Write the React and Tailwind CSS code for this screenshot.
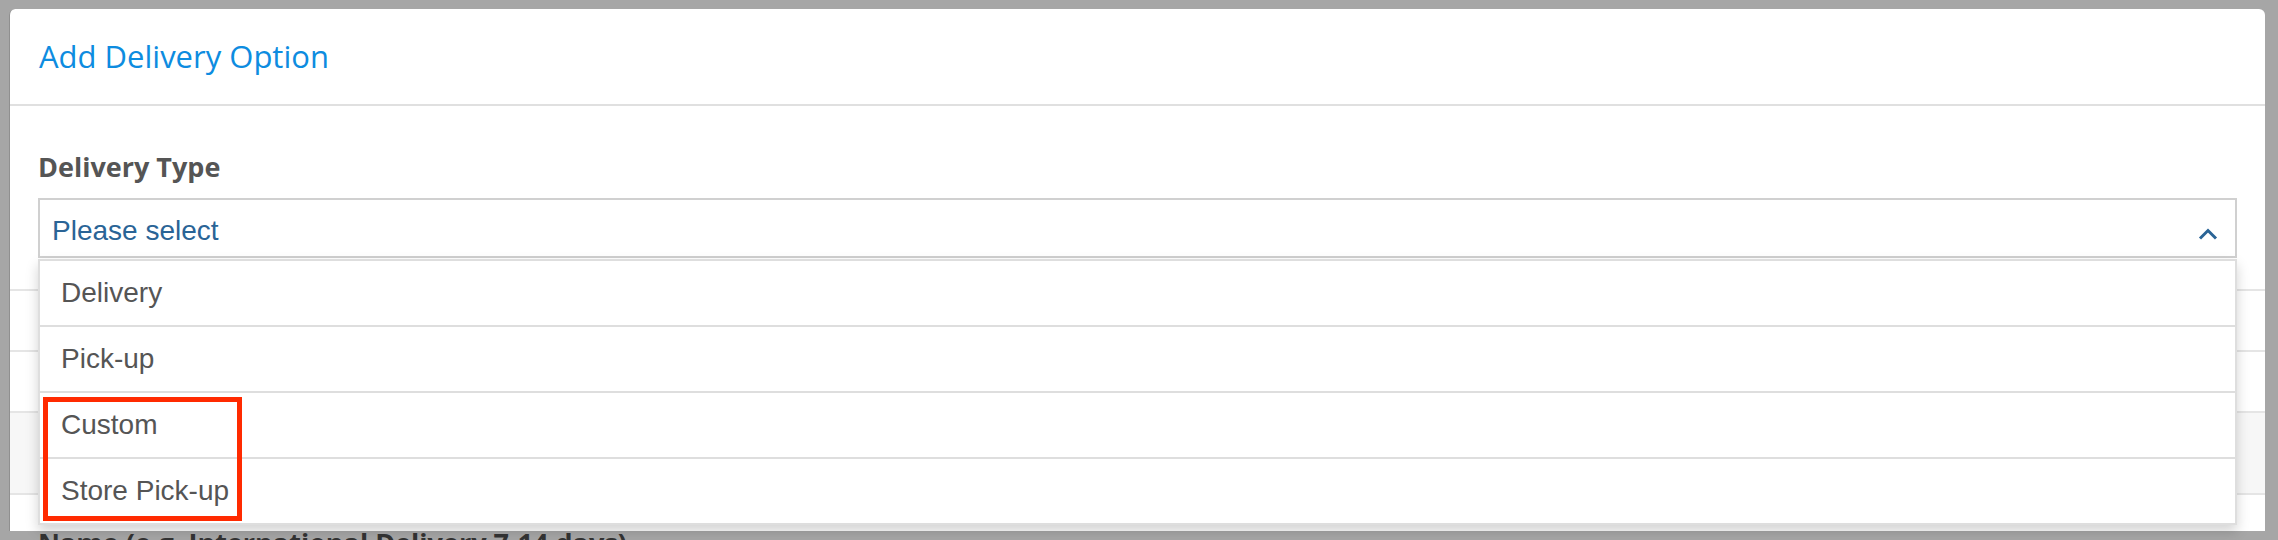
import React from "react";

const options = ["Delivery", "Pick-up", "Custom", "Store Pick-up"];

function ChevronUp() {
  return (
    <svg width="20" height="12" viewBox="0 0 20 12" className="mt-[12px]">
      <polyline points="2,10.5 10,2.5 18,10.5" fill="none" stroke="#2a6496" strokeWidth="3" />
    </svg>
  );
}

export default function App() {
  return (
    <div className="w-[2278px] h-[540px] bg-[#a6a6a6] overflow-hidden pt-[9px] pl-[9px] pr-[13px]">
      <div className="relative h-[522px] bg-white rounded-t-[6px] border-l border-[#8f8f8f]">
        {/* header */}
        <div className="h-[97px] border-b-2 border-[#e0e0e0] px-[29px] pt-[29px]">
          <h1 className="text-[31px] leading-[1.2] text-[#0d8ce0] font-['Open_Sans',sans-serif]">
            Add Delivery Option
          </h1>
        </div>

        {/* form */}
        <div className="px-[28px] pt-[45px]">
          <label className="block text-[27px] leading-[1.2] font-bold text-[#555] mb-[15px] font-['Open_Sans',sans-serif]">
            Delivery Type
          </label>
          <div className="relative z-10">
            <div className="h-[60px] border-2 border-[#d0d0d0] flex items-center justify-between pl-[12px] pr-[17px] font-['Liberation_Sans',Arial,sans-serif]">
              <span className="text-[28px] text-[#2a6496] pt-[5px]">Please select</span>
              <ChevronUp />
            </div>
            <div className="absolute left-0 right-0 top-[61px] bg-white border-2 border-[#dedede] shadow-[0_6px_12px_rgba(0,0,0,0.175)] font-['Liberation_Sans',Arial,sans-serif]">
              {options.map((o, i) => (
                <div
                  key={o}
                  className={
                    "flex items-center pl-[21px] text-[28px] text-[#555]" +
                    (i > 0 ? " h-[66px] border-t-2 border-[#dedede]" : " h-[64px]")
                  }
                >
                  {o}
                </div>
              ))}
              {/* highlight annotation */}
              <div className="absolute left-[3px] top-[136px] w-[199px] h-[124px] border-[5px] border-[#ff2a00]" />
            </div>
          </div>
        </div>

        {/* rows behind the menu */}
        <div className="mt-[31px]">
          <div className="h-[61px] border-t-2 border-[#e5e5e5]" />
          <div className="h-[61px] border-t-2 border-[#e5e5e5]" />
          <div className="h-[82px] border-t-2 border-[#e5e5e5] bg-[#f7f7f7]" />
          <div className="border-t-2 border-[#e5e5e5]" />
        </div>
      </div>
      <div className="h-[9px] overflow-hidden pl-[29px]">
        <p className="-mt-[2px] text-[27px] leading-none font-bold text-[#333] font-['Open_Sans',sans-serif] whitespace-nowrap">
          Name (e.g. International Delivery 7-14 days)
        </p>
      </div>
    </div>
  );
}
